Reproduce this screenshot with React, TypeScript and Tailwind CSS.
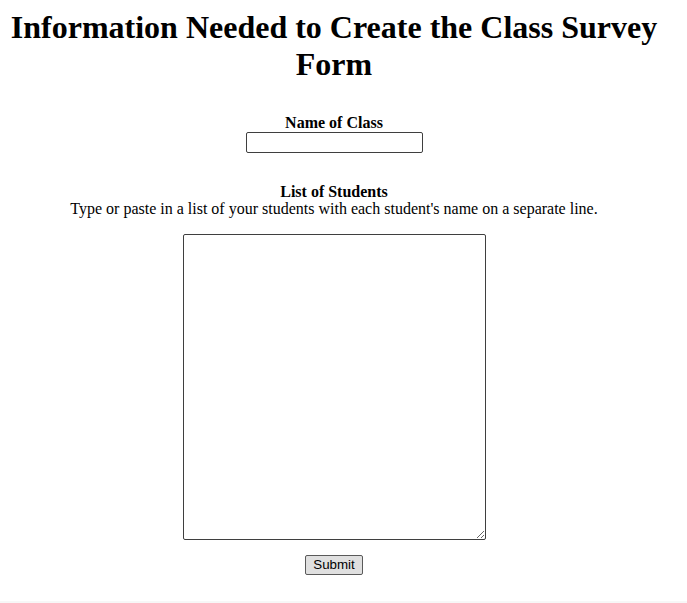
export default function App() {
  return (
    <div className="min-h-[603px] flex flex-col bg-white text-black font-['Liberation_Serif','Times_New_Roman',serif]">
      <main className="flex-1 w-[668px] px-2 pt-[9px] text-center">
        <h1 className="text-[32px] font-bold leading-[37px]">
          Information Needed to Create the Class Survey Form
        </h1>

        {/* Class name */}
        <div className="mt-[31px] flex flex-col items-center">
          <label htmlFor="className" className="text-base font-bold leading-[17.7px]">
            Name of Class
          </label>
          <input
            id="className"
            type="text"
            className="w-[177px] h-[21px] border border-[#3f3f3f] rounded-[2px] px-[2px] text-[13px]"
          />
        </div>

        {/* Students */}
        <div className="mt-[30px] flex flex-col items-center">
          <label htmlFor="students" className="text-base font-bold leading-[17.7px]">
            List of Students
          </label>
          <p className="text-base leading-[17.7px]">
            Type or paste in a list of your students with each student's name on a separate line.
          </p>
          <textarea
            id="students"
            className="mt-[16px] w-[303px] h-[306px] border border-[#3f3f3f] rounded-[2px] p-[2px] resize"
          />
          <button
            type="submit"
            className="mt-[15px] w-[58px] h-[20px] border border-[#5a5a5a] rounded-[2px] bg-[#e0e0e0] text-[13.33px] leading-none font-['Liberation_Sans',Arial,sans-serif]"
          >
            Submit
          </button>
        </div>
      </main>
      <div className="h-[2px] bg-[#f7f7f7]" />
    </div>
  );
}
